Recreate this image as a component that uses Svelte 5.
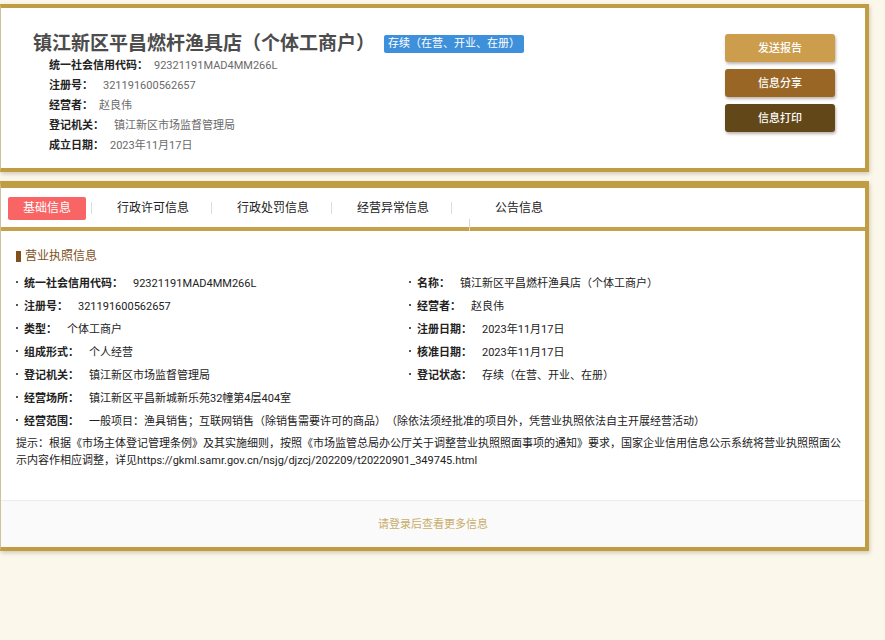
<script lang="ts">
  type Field = { label: string; value: string; near?: boolean; wide?: boolean }

  const name = '镇江新区平昌燃杆渔具店（个体工商户）'
  const status = '存续（在营、开业、在册）'

  const summary: Field[] = [
    { label: '统一社会信用代码：', value: '92321191MAD4MM266L', near: true },
    { label: '注册号：', value: '321191600562657' },
    { label: '经营者：', value: '赵良伟', near: true },
    { label: '登记机关：', value: '镇江新区市场监督管理局' },
    { label: '成立日期：', value: '2023年11月17日', near: true },
  ]

  const tabs = ['基础信息', '行政许可信息', '行政处罚信息', '经营异常信息', '公告信息']

  const licence: Field[] = [
    { label: '统一社会信用代码：', value: '92321191MAD4MM266L' },
    { label: '名称：', value: name },
    { label: '注册号：', value: '321191600562657' },
    { label: '经营者：', value: '赵良伟' },
    { label: '类型：', value: '个体工商户' },
    { label: '注册日期：', value: '2023年11月17日' },
    { label: '组成形式：', value: '个人经营' },
    { label: '核准日期：', value: '2023年11月17日' },
    { label: '登记机关：', value: '镇江新区市场监督管理局' },
    { label: '登记状态：', value: status },
    { label: '经营场所：', value: '镇江新区平昌新城新乐苑32幢第4层404室', wide: true },
    {
      label: '经营范围：',
      value:
        '一般项目：渔具销售；互联网销售（除销售需要许可的商品）（除依法须经批准的项目外，凭营业执照依法自主开展经营活动）',
      wide: true,
    },
  ]

  let active = $state(0)
</script>

<main class="page">
  <section class="card summary">
    <div class="summary__info">
      <div class="summary__head">
        <h1 class="summary__name">{name}</h1>
        <span class="badge">{status}</span>
      </div>
      <dl class="summary__list">
        {#each summary as field}
          <div class="field" class:field--near={field.near}>
            <dt>{field.label}</dt>
            <dd>{field.value}</dd>
          </div>
        {/each}
      </dl>
    </div>
    <div class="actions">
      <button type="button" class="action action--send">发送报告</button>
      <button type="button" class="action action--share">信息分享</button>
      <button type="button" class="action action--print">信息打印</button>
    </div>
  </section>

  <section class="card detail">
    <div class="tabs" role="tablist">
      {#each tabs as tab, i}
        <button
          type="button"
          role="tab"
          class="tab"
          class:tab--active={active === i}
          aria-selected={active === i}
          onclick={() => (active = i)}
        >
          <span>{tab}</span>
        </button>
      {/each}
    </div>

    <div class="detail__body">
      <h2 class="detail__title">营业执照信息</h2>
      <dl class="grid">
        {#each licence as field}
          <div class="field field--dot" class:field--wide={field.wide}>
            <dt>{field.label}</dt>
            <dd>{field.value}</dd>
          </div>
        {/each}
      </dl>
      <p class="notice">
        提示：根据《市场主体登记管理条例》及其实施细则，按照《市场监管总局办公厅关于调整营业执照照面事项的通知》要求，国家企业信用信息公示系统将营业执照照面公示内容作相应调整，详见https://gkml.samr.gov.cn/nsjg/djzcj/202209/t20220901_349745.html
      </p>
    </div>

    <footer class="more">
      <a href="#login">请登录后查看更多信息</a>
    </footer>
  </section>
</main>

<style>
  :global(body) {
    background: #fbf8eb;
  }

  .page {
    display: flex;
    flex-direction: column;
    gap: 9px;
    padding: 4px 16px 8px 0;
    font-family: Roboto, 'Noto Sans CJK SC', sans-serif;
    font-size: 11px;
    line-height: 17px;
    color: #222;
    text-spacing-trim: space-all;
  }

  .card {
    background: #fff;
    border: 4px solid #c09c42;
    border-left: 1px solid #cfc19a;
    box-shadow: 1px 2px 4px rgba(110, 80, 70, 0.28);
  }

  h1,
  h2,
  dl,
  dd,
  p {
    margin: 0;
  }

  button {
    border: none;
    padding: 0;
    font: inherit;
    cursor: pointer;
  }

  /* summary */
  .summary {
    display: flex;
    justify-content: space-between;
    padding: 26px 30px 12px 32px;
  }

  .summary__head {
    display: flex;
    align-items: center;
    gap: 9px;
    height: 20px;
  }

  .summary__name {
    font-size: 19px;
    font-weight: 700;
    line-height: 18px;
    color: #4c4c4c;
  }

  .badge {
    padding: 0 4px;
    border-radius: 2px;
    background: #3e90da;
    color: #fff;
    line-height: 18px;
  }

  .summary__list {
    padding: 2px 0 0 16px;
  }

  .summary__list dd {
    color: #6a6a6a;
  }

  .field {
    display: flex;
    gap: 10px;
    line-height: 20px;
  }

  .field--near {
    gap: 6px;
  }

  dt {
    flex-shrink: 0;
    font-weight: 700;
  }

  .actions {
    display: flex;
    flex-direction: column;
    gap: 7px;
  }

  .action {
    width: 110px;
    height: 28px;
    border-radius: 3px;
    color: #fff;
    font-weight: 500;
    box-shadow: 1px 2px 3px rgba(70, 40, 30, 0.35);
  }

  .action--send {
    background: #cc9d4c;
  }

  .action--share {
    background: #996625;
  }

  .action--print {
    background: #624818;
  }

  /* detail */
  .detail {
    border-top-width: 7px;
  }

  .tabs {
    display: flex;
    align-items: center;
    border-bottom: 4px solid #c7a04c;
  }

  .tab {
    position: relative;
    width: 120px;
    height: 39px;
    padding-top: 2px;
    background: none;
    color: #222;
    font-size: 12px;
  }

  .tab:first-child {
    width: 92px;
  }

  .tab:last-child {
    width: 132px;
  }

  .tab:not(:last-child)::after {
    content: '';
    position: absolute;
    top: 14px;
    right: 1px;
    width: 1px;
    height: 12px;
    background: #d8dfe4;
  }

  .tab:last-child::before {
    content: '';
    position: absolute;
    bottom: -4px;
    left: 16px;
    width: 1px;
    height: 12px;
    background: #ddd6c4;
  }

  .tab span {
    display: inline-block;
    padding: 0 15px;
    border-radius: 2px;
    line-height: 23px;
  }

  .tab--active span {
    background: #f96464;
    color: #fff;
  }

  .detail__body {
    padding: 16px 22px 31px 15px;
  }

  .detail__title {
    display: flex;
    align-items: center;
    gap: 4px;
    font-size: 12px;
    font-weight: 400;
    line-height: 18px;
    color: #80511c;
  }

  .detail__title::before {
    content: '';
    width: 5px;
    height: 11px;
    background: #80511c;
  }

  .grid {
    display: grid;
    grid-template-columns: 393fr 434fr;
    padding: 7px 0 2px;
  }

  .grid .field {
    line-height: 23px;
  }

  .field--wide {
    grid-column: 1 / -1;
  }

  .field--dot dt {
    display: flex;
    align-items: center;
    gap: 6px;
  }

  .field--dot dt::before {
    content: '';
    width: 2px;
    height: 2px;
    margin-bottom: 4px;
    background: #555;
  }

  .more {
    padding-top: 2px;
    border-top: 1px solid #ececec;
    background: #fafafa;
    text-align: center;
    line-height: 44px;
  }

  .more a {
    color: #c9ad6a;
    text-decoration: none;
  }
</style>
